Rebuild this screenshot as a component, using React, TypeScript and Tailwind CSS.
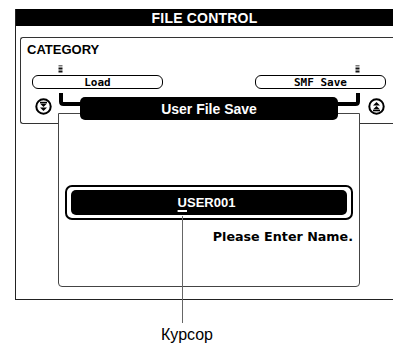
import React from "react";

const Marker = ({ className = "" }: { className?: string }) => (
  <svg width="5" height="8" viewBox="0 0 5 8" className={className}>
    <rect x="0.5" y="0" width="4" height="1.5" fill="#777" />
    <rect x="0.5" y="2.5" width="4" height="2" fill="#111" />
    <rect x="0.5" y="5.5" width="4" height="2" fill="#111" />
  </svg>
);

const CircleIcon = ({ up = false }: { up?: boolean }) => (
  <svg width="17" height="17" viewBox="0 0 17 17">
    <circle cx="8.5" cy="8.5" r="7.2" fill="white" stroke="black" strokeWidth="2" />
    {up ? (
      <g fill="black">
        <path d="M8.5 4 L12 7.5 L5 7.5 Z" />
        <path d="M8.5 8 L12 11.5 L5 11.5 Z" />
        <rect x="5" y="12" width="7" height="1.3" />
      </g>
    ) : (
      <g fill="black">
        <rect x="5" y="3.8" width="7" height="1.3" />
        <path d="M5 5.6 L12 5.6 L8.5 9 Z" />
        <path d="M5 9.5 L12 9.5 L8.5 13 Z" />
      </g>
    )}
  </svg>
);

export default function App() {
  return (
    <div
      className="relative w-[393px] h-[352px] overflow-hidden bg-white text-black"
      style={{ fontFamily: '"Liberation Sans", Arial, sans-serif' }}
    >
      <div className="pt-[9px] pl-[15px]">
        <div className="relative w-[378px] h-[291px] border-l border-b border-[#222]">
          <div className="h-[17px] bg-black flex items-center justify-center text-white font-bold text-[14px] leading-none tracking-[0.2px]">
            FILE CONTROL
          </div>

          {/* category panel */}
          <div className="mt-[11px] ml-[4px] h-[87px] border-t border-l border-b border-[#333] rounded-l-[3px]">
            <p className="pl-[6px] pt-[5px] text-[13px] font-bold leading-[13px]">CATEGORY</p>
            <div className="flex mt-[9px] ml-[11px]">
              <div className="w-[131px]">
                <Marker className="ml-[26px] block" />
                <div
                  className="mt-[2px] h-[14px] border border-black rounded-[6px] flex items-center justify-center text-[11px] font-bold leading-none"
                  style={{ fontFamily: '"DejaVu Sans Mono", monospace' }}
                >
                  Load
                </div>
              </div>
              <div className="w-[131px] ml-[92px]">
                <Marker className="ml-[100px] block" />
                <div
                  className="mt-[2px] h-[14px] border border-black rounded-[6px] flex items-center justify-center text-[11px] font-bold leading-none"
                  style={{ fontFamily: '"DejaVu Sans Mono", monospace' }}
                >
                  SMF Save
                </div>
              </div>
            </div>
            <div className="flex justify-between mt-[9px] pl-[14px] pr-[8px]">
              <CircleIcon />
              <CircleIcon up />
            </div>
          </div>

          {/* dialog */}
          <div className="absolute left-[42px] top-[104px] w-[302px] h-[174px] bg-white border border-[#444] rounded-b-[4px]">
            <div className="absolute left-[21px] top-[-17px] w-[258px] h-[23px] bg-black rounded-[5px] flex items-center justify-center text-white font-bold text-[14px] leading-none">
              User File Save
            </div>
            <div className="mt-[71px] ml-[6px] w-[288px] border-2 border-black rounded-[7px] px-[4px] py-[3px]">
              <div className="h-[25px] bg-black rounded-[5px] flex items-center justify-center pr-[5px] text-white font-bold text-[13px] leading-none">
                <span className="underline decoration-2 underline-offset-[3px]">U</span>SER001
              </div>
            </div>
            <p
              className="mt-[9px] pr-[6px] text-right font-bold text-[12.7px] leading-[15px]"
              style={{ fontFamily: '"DejaVu Sans", sans-serif' }}
            >
              Please Enter Name.
            </p>
          </div>
        </div>
      </div>

      {/* connectors */}
      <svg className="absolute left-0 top-0 pointer-events-none" width="393" height="352" viewBox="0 0 393 352">
        <path d="M61 93 V101.5 Q61 104 63.5 104 H80" fill="none" stroke="black" strokeWidth="4" />
        <path d="M358 93 V101.5 Q358 104 355.5 104 H338" fill="none" stroke="black" strokeWidth="4" />
      </svg>

      <div className="absolute left-[182px] top-[216px] w-px h-[107px] bg-[#666]" />

      <div className="mt-[27px] ml-[161px] text-[16px] leading-[16px]">Курсор</div>
    </div>
  );
}
